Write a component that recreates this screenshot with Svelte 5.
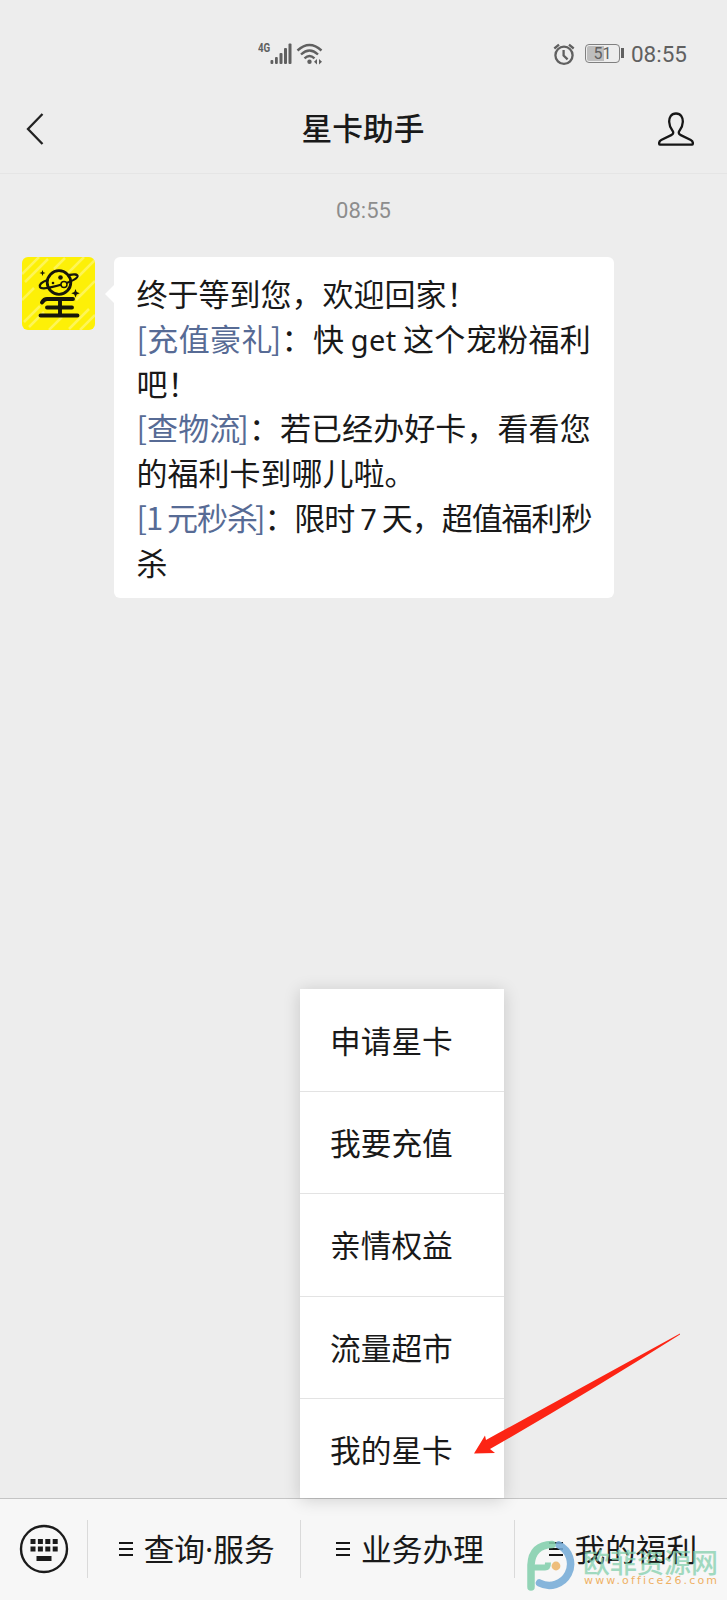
<script>
  const menuItems = ['申请星卡', '我要充值', '亲情权益', '流量超市', '我的星卡'];
  const tabs = ['查询·服务', '业务办理', '我的福利'];
  const keyColumns = [0, 1, 2, 3];
</script>

<div class="phone">
  <div class="status">
    <div class="signal">
      <span class="network">4G</span>
      <svg width="54" height="24" viewBox="0 0 54 24">
        <g fill="#606060">
          <rect x="0.500" y="18" width="2.8" height="4" rx="1" />
          <rect x="5" y="15" width="2.8" height="7" rx="1" />
          <rect x="9.500" y="11" width="3" height="11" rx="1" />
          <rect x="14" y="6" width="3" height="16" rx="1" />
          <rect x="18.500" y="1.5" width="3" height="20.500" rx="1" />
          <circle cx="39.500" cy="19.8" r="2.2" />
          <path d="M47 17v5.5l-3-2.7zM49 17v5.5l3-2.7z" />
        </g>
        <g fill="none" stroke="#606060" stroke-width="2.4">
          <path d="M27.500 8.5q12-11 24 0" />
          <path d="M31 12.5q8.500-8 17 0" />
          <path d="M34.500 16.300q5-4.500 10 0" />
        </g>
      </svg>
    </div>
    <div class="status-right">
      <svg width="22" height="23" viewBox="0 0 22 23" fill="none" stroke="#606060" stroke-width="2.300">
        <circle cx="11" cy="12.300" r="8.600" />
        <path d="M10.600 7v5.600l4 3.800M1.300 5.500L6 1.600M20.700 5.500L16 1.600" />
      </svg>
      <div class="battery"><span>51</span></div>
      <span class="clock">08:55</span>
    </div>
  </div>

  <header>
    <svg width="18" height="32" viewBox="0 0 18 32" fill="none" stroke="#222" stroke-width="2.300">
      <path d="M16.500 1L2 16l14.500 15" />
    </svg>
    <h1>星卡助手</h1>
    <svg width="36" height="34" viewBox="0 0 36 34" fill="none" stroke="#161616" stroke-width="2.300" stroke-linejoin="round">
      <path d="M18 1.500c-5 0-7 4-6.800 8.500.1 4 1.600 6.500 3.300 8.700 1.200 1.700.9 3.100-.8 4.200L3.200 28c-1.800.9-2.300 2.200-2 4 .1.500.4.700.9.700h31.800c.5 0 .8-.2.9-.7.300-1.800-.2-3.100-2-4l-10.500-5.100c-1.700-1.100-2-2.500-.8-4.200 1.700-2.200 3.200-4.700 3.300-8.700C25 5.500 23 1.500 18 1.500z" />
    </svg>
  </header>

  <main>
    <time>08:55</time>
    <div class="message">
      <svg class="avatar" width="73" height="73" viewBox="0 0 73 73">
        <rect width="73" height="73" fill="#fdf008" />
        <g stroke="#fff782" stroke-width="2.500" opacity=".65">
          <path d="M0 17L17 0M3 25L26 2M0 43l12-12M45 17L62 0M55 21l18-18M54 43l19-19M2 65l16-16M7 70l15-15M27 73l13-13M47 72l20-20M58 73l15-15M32 12L43 1" />
        </g>
        <g fill="none" stroke="#17160a" stroke-linecap="round">
          <circle cx="37" cy="25.500" r="11.800" stroke-width="2.800" />
          <path d="M25.500 23c-6 2-8.500 4.500-7.500 7 1 2.200 7 1.200 11.500.2 11-2.700 25-7.200 26-10.700.6-2.500-4-2.300-8-1.500" stroke-width="2.300" />
          <path d="M20 45.500q2-3.500 5-3.500h26M38 42v16M25 50.500h25M18.500 58.500h37" stroke-width="3.900" />
        </g>
        <g fill="#17160a">
          <circle cx="38.500" cy="20.500" r="2.300" />
          <circle cx="31" cy="26" r="1.300" />
          <circle cx="42" cy="27.500" r="3" fill="#fdf008" stroke="#17160a" stroke-width="1.500" />
          <path d="M20.500 13l.8 2.200 2.200.8-2.200.8-.8 2.200-.8-2.200-2.200-.8 2.200-.8zM53.500 32l1.200 3 3 1.200-3 1.200-1.200 3-1.200-3-3-1.200 3-1.200z" />
        </g>
      </svg>
      <div class="bubble">
        <p>终于等到您，欢迎回家！</p>
        <p class="loose"><a href="#gift">[充值豪礼<span class="close">]</span></a>：快<span class="latin">get</span>这个宠粉福利</p>
        <p>吧！</p>
        <p class="medium"><a href="#delivery">[查物流<span class="close">]</span></a>：若已经办好卡，看看您</p>
        <p>的福利卡到哪儿啦。</p>
        <p class="tight"><a href="#sale">[<span class="one">1</span>元秒杀<span class="close">]</span></a>：限时<span class="latin">7</span>天，超值福利秒</p>
        <p>杀</p>
      </div>
    </div>
  </main>

  <footer>
    <div class="keyboard">
      <svg width="50" height="50" viewBox="0 0 50 50" fill="#1b1b1b">
        <circle cx="25" cy="25" r="23" fill="none" stroke="#1b1b1b" stroke-width="2.400" />
        {#each keyColumns as col}
          <rect x={11.5 + col * 7.4} y="15" width="5" height="5" />
          <rect x={11.5 + col * 7.4} y="22.500" width="5" height="5" />
        {/each}
        <rect x="17.500" y="32" width="15" height="5" />
      </svg>
    </div>
    {#each tabs as tab}
      <div class="tab">
        <svg width="14" height="14" viewBox="0 0 14 14" stroke="#161616" stroke-width="2">
          <path d="M0 1h14M0 7h14M0 13h14" />
        </svg>
        <span>{tab}</span>
      </div>
    {/each}
  </footer>

  <div class="menu">
    {#each menuItems as item}
      <div class="menu-item">{item}</div>
    {/each}
  </div>

  <svg class="arrow" width="208" height="122" viewBox="0 0 208 122">
    <path d="M0 120.500L11 102.500l1 4.500Q105 56 206 .5v1Q112 61 16 116l5 4z" fill="#fc2414" />
  </svg>

  <div class="watermark">
    <svg width="52" height="52" viewBox="0 0 52 52" fill="none">
      <path d="M33 5A21 21 0 1 1 13.500 43" stroke="#77acd8" stroke-width="7.500" stroke-linecap="round" />
      <path d="M5 47V25Q6 5 26 4.500" stroke="#85d0ae" stroke-width="7.500" stroke-linecap="round" />
      <path d="M5 27.500h14q3 0 3-5" stroke="#85d0ae" stroke-width="6" />
      <circle cx="30" cy="26" r="4.400" fill="#edb76c" />
    </svg>
    <div class="mark-text">
      <span class="mark-name">欧菲资源网</span>
      <span class="mark-url">www.office26.com</span>
    </div>
  </div>
</div>

<style>
  :global(body) {
    background: #ededed;
  }

  .phone {
    position: relative;
    display: flex;
    flex-direction: column;
    width: 727px;
    height: 1600px;
    overflow: hidden;
    background: #ededed;
    color: #191919;
    font-family: "Noto Sans CJK SC", sans-serif;
    font-size: 31px;
  }

  svg {
    display: block;
    flex: none;
  }

  .status {
    display: flex;
    box-sizing: border-box;
    height: 90px;
    padding: 41px 40px 0 258px;
    justify-content: space-between;
    align-items: flex-start;
    color: #606060;
    font-family: Roboto, sans-serif;
  }

  .signal {
    display: flex;
    gap: 1px;
    padding-top: 1px;
  }

  .network {
    width: 11px;
    margin-top: -1px;
    font-size: 13px;
    font-weight: 700;
    line-height: 14px;
    transform: scaleX(0.75);
    transform-origin: left;
  }

  .status-right {
    display: flex;
    align-items: center;
    height: 26px;
  }

  .battery {
    position: relative;
    box-sizing: border-box;
    width: 35px;
    height: 19px;
    margin: -1px 11px 0 10px;
    border: 1.5px solid #808080;
    border-radius: 4px;
    background: linear-gradient(90deg, #bdbdbd 0 18px, transparent 18px);
    background-clip: content-box;
    padding: 1px;
    font-size: 16px;
    line-height: 15px;
    text-align: center;
  }

  .battery::after {
    content: '';
    position: absolute;
    top: 3px;
    right: -5px;
    width: 3px;
    height: 10px;
    background: #606060;
  }

  .clock {
    font-size: 22.5px;
    line-height: 26px;
  }

  header {
    display: flex;
    box-sizing: border-box;
    height: 84px;
    padding: 0 33px 5px 26px;
    justify-content: space-between;
    align-items: center;
    border-bottom: 1px solid #e5e5e5;
  }

  h1 {
    margin: -4px 0 0 24px;
    font-size: 30.7px;
    font-weight: 500;
    line-height: 40px;
  }

  main {
    flex: 1;
  }

  time {
    display: block;
    margin-top: 23px;
    height: 28px;
    color: #8d8d8d;
    font-family: Roboto, sans-serif;
    font-size: 22px;
    line-height: 28px;
    text-align: center;
  }

  .message {
    display: flex;
    gap: 19.5px;
    margin: 32px 0 0 21.5px;
  }

  .avatar {
    border-radius: 6px;
  }

  .bubble {
    position: relative;
    box-sizing: border-box;
    width: 500px;
    height: 341px;
    padding: 14px 0 0 22.5px;
    border-radius: 6px;
    background: #fff;
  }

  .bubble::before {
    content: '';
    position: absolute;
    left: -9px;
    top: 27px;
    border: 10px solid transparent;
    border-left: 0;
    border-right-color: #fff;
  }

  .bubble p {
    margin: 0;
    height: 44.75px;
    line-height: 44.75px;
    white-space: nowrap;
  }

  .bubble a {
    color: #576b95;
    text-decoration: none;
  }

  .close {
    margin-left: -2px;
  }

  .loose {
    letter-spacing: 0.35px;
  }

  .medium {
    letter-spacing: 0.08px;
  }

  .tight {
    letter-spacing: -1.05px;
  }

  .latin {
    margin: 0 6.5px;
    font-family: "Noto Sans", sans-serif;
    font-size: 29px;
    line-height: 1;
  }

  .tight .latin {
    margin: 0 6px;
  }

  .one {
    margin-right: 5px;
  }

  footer {
    display: flex;
    box-sizing: border-box;
    height: 102px;
    padding-top: 21px;
    border-top: 1px solid #c4c4c4;
    background: #f7f7f7;
  }

  .keyboard {
    width: 87px;
    padding: 4px 0 0 18.5px;
    box-sizing: border-box;
  }

  .tab {
    display: flex;
    box-sizing: border-box;
    flex: 1;
    height: 58px;
    align-items: center;
    justify-content: center;
    gap: 11px;
    padding-left: 5px;
    border-left: 1px solid #dadada;
    /* Latin face first keeps the middle dot narrow */
    font-family: "Noto Sans", "Noto Sans CJK SC", sans-serif;
    font-size: 30.7px;
    line-height: 58px;
    white-space: nowrap;
  }

  .menu {
    position: absolute;
    left: 300px;
    top: 989px;
    width: 204px;
    height: 509px;
    background: #fff;
    box-shadow: 0 2px 16px rgba(0, 0, 0, 0.16);
  }

  .menu-item {
    box-sizing: border-box;
    height: 102.4px;
    padding-left: 30px;
    border-bottom: 1px solid #e3e3e3;
    font-size: 30.7px;
    line-height: 100px;
  }

  .menu-item:first-child {
    height: 103px;
    line-height: 101px;
  }

  .menu-item:last-child {
    border-bottom: 0;
  }

  .arrow {
    position: absolute;
    left: 474px;
    top: 1333px;
  }

  .watermark {
    position: absolute;
    left: 526px;
    top: 1540px;
    display: flex;
    gap: 5px;
    opacity: 0.88;
  }

  .mark-text {
    display: flex;
    flex-direction: column;
    padding-top: 5px;
    white-space: nowrap;
  }

  .mark-name {
    color: #85d0ae;
    font-size: 27px;
    font-weight: 500;
    line-height: 33px;
    opacity: 0.85;
  }

  .mark-url {
    margin-top: -4px;
    padding-left: 1px;
    color: #efa850;
    font-family: "DejaVu Sans", sans-serif;
    font-size: 11px;
    line-height: 14px;
    letter-spacing: 2.15px;
  }
</style>
